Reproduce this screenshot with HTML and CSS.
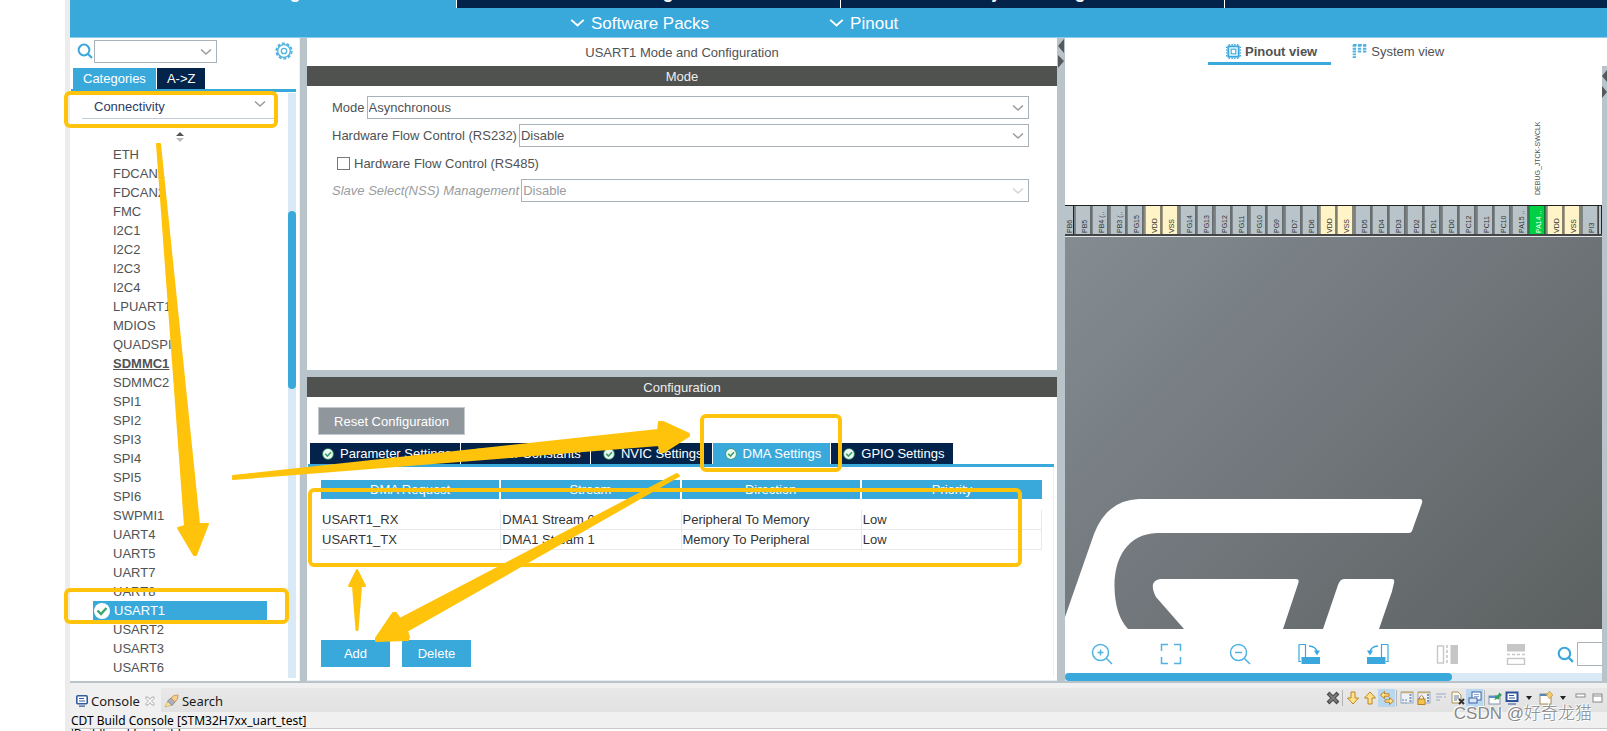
FILE: index.html
```html
<!DOCTYPE html>
<html lang="en">
<head>
<meta charset="utf-8">
<title>USART1 Mode and Configuration</title>
<link rel="stylesheet" href="styles.css">
</head>
<body>
<svg class="defs" aria-hidden="true">
  <symbol id="chev" viewBox="0 0 12 8"><path d="M1 1.5L6 6L11 1.5" fill="none" stroke="currentColor" stroke-width="1.6"/></symbol>
  <symbol id="ok" viewBox="0 0 12 12"><circle cx="6" cy="6" r="5.8" fill="#3f9f6c"/><circle cx="6" cy="6" r="4.9" fill="#eefaf2"/><path d="M3.2 5.8L5.4 8L9 4.2" fill="none" stroke="#35a06a" stroke-width="1.6"/></symbol>
  <symbol id="mag" viewBox="0 0 16 16"><circle cx="7" cy="7" r="5.4" fill="none" stroke="#3aa8dc" stroke-width="2"/><path d="M11 11L15 15" stroke="#3aa8dc" stroke-width="2.2"/></symbol>
  <symbol id="rot" viewBox="0 0 22 22"><path d="M1 1.500H7.500V14M1 1.500V18.500H3" fill="none" stroke="#3aa8dc" stroke-width="1.200"/><path d="M3.500 14H22V21H3.500Z" fill="#3aa8dc"/><path d="M11 3Q18 3.500 19 9" fill="none" stroke="#3aa8dc" stroke-width="1.300"/><path d="M16 7.500H22L19 12.500Z" fill="#3aa8dc"/></symbol>
</svg>
<div class="app">
  <nav class="top-tabs">
    <a class="top-tab top-tab-on" href="#">Pinout &amp; Configuration</a>
    <a class="top-tab" href="#">Clock Configuration</a>
    <a class="top-tab" href="#">Project Manager</a>
    <a class="top-tab" href="#"></a>
  </nav>
  <div class="sub-bar">
    <button class="drop"><svg class="drop-chev"><use href="#chev"/></svg>Software Packs</button>
    <button class="drop"><svg class="drop-chev"><use href="#chev"/></svg>Pinout</button>
  </div>

  <div class="workspace">
    <aside class="side">
      <div class="side-search">
        <svg class="mag"><use href="#mag"/></svg>
        <div class="combo side-combo"><select aria-label="Search peripheral"><option></option></select><svg class="chev"><use href="#chev"/></svg></div>
        <button class="gear" aria-label="Settings"><svg viewBox="0 0 18 18"><circle cx="9" cy="9" r="7.600" fill="none" stroke="#4fb2e0" stroke-width="2" stroke-dasharray="3 1.775"/><circle cx="9" cy="9" r="6.300" fill="none" stroke="#4fb2e0" stroke-width="1.300"/><circle cx="9" cy="9" r="2.700" fill="none" stroke="#4fb2e0" stroke-width="1.300"/></svg></button>
      </div>
      <div class="side-tabs"><button class="side-tab side-tab-on">Categories</button><button class="side-tab">A-&gt;Z</button></div>
      <div class="side-body">
        <div class="side-main">
          <button class="group">Connectivity<svg class="chev"><use href="#chev"/></svg></button>
          <svg class="sorter" viewBox="0 0 10 12"><path d="M1 5L5 1L9 5Z" fill="#555"/><path d="M1 7L5 11L9 7Z" fill="#bbb"/></svg>
          <ul class="list">
            <li>ETH</li><li>FDCAN1</li><li>FDCAN2</li><li>FMC</li><li>I2C1</li><li>I2C2</li><li>I2C3</li><li>I2C4</li><li>LPUART1</li><li>MDIOS</li><li>QUADSPI</li><li class="strong">SDMMC1</li><li>SDMMC2</li><li>SPI1</li><li>SPI2</li><li>SPI3</li><li>SPI4</li><li>SPI5</li><li>SPI6</li><li>SWPMI1</li><li>UART4</li><li>UART5</li><li>UART7</li><li>UART8</li>
            <li class="picked"><svg viewBox="0 0 16 16"><circle cx="8" cy="8" r="8" fill="#fff"/><path d="M3.500 7.500L7 11L12.500 5" fill="none" stroke="#3aa76d" stroke-width="2.400"/></svg>USART1</li>
            <li>USART2</li><li>USART3</li><li>USART6</li>
          </ul>
        </div>
        <div class="track"><div class="thumb"></div></div>
      </div>
    </aside>
    <div class="split"></div>

    <main class="main">
      <h1 class="title">USART1 Mode and Configuration</h1>
      <h2 class="bar">Mode</h2>
      <form class="mode">
        <div class="field"><label for="m">Mode</label><div class="combo"><select id="m"><option>Asynchronous</option></select><svg class="chev"><use href="#chev"/></svg></div></div>
        <div class="field"><label for="h">Hardware Flow Control (RS232)</label><div class="combo"><select id="h"><option>Disable</option></select><svg class="chev"><use href="#chev"/></svg></div></div>
        <div class="check"><input type="checkbox" id="c"><label for="c">Hardware Flow Control (RS485)</label></div>
        <div class="field off"><label for="s">Slave Select(NSS) Management</label><div class="combo"><select id="s" disabled><option>Disable</option></select><svg class="chev"><use href="#chev"/></svg></div></div>
      </form>
      <div class="hsplit"></div>
      <h2 class="bar">Configuration</h2>
      <section class="config">
        <button class="reset">Reset Configuration</button>
        <div class="tabs">
          <button class="tab"><svg><use href="#ok"/></svg>Parameter Settings</button>
          <button class="tab"><svg><use href="#ok"/></svg>User Constants</button>
          <button class="tab"><svg><use href="#ok"/></svg>NVIC Settings</button>
          <button class="tab tab-on"><svg><use href="#ok"/></svg>DMA Settings</button>
          <button class="tab"><svg><use href="#ok"/></svg>GPIO Settings</button>
        </div>
        <div class="pane">
          <table class="dma">
            <thead><tr><th>DMA Request</th><th>Stream</th><th>Direction</th><th>Priority</th></tr></thead>
            <tbody>
              <tr class="gap"><td colspan="4"></td></tr>
              <tr><td>USART1_RX</td><td>DMA1 Stream 0</td><td>Peripheral To Memory</td><td>Low</td></tr>
              <tr><td>USART1_TX</td><td>DMA1 Stream 1</td><td>Memory To Peripheral</td><td>Low</td></tr>
            </tbody>
          </table>
          <div class="actions"><button class="act">Add</button><button class="act">Delete</button></div>
        </div>
      </section>
    </main>
    <div class="split split-r"><svg viewBox="0 0 8 30"><path d="M7 1V15L1 8Z M1 17V30L7 23Z" fill="#55595b"/></svg></div>

    <section class="view">
      <div class="view-tabs">
        <button class="view-tab view-on"><svg viewBox="0 0 16 16" fill="none" stroke="#3aa8dc"><path d="M3.500 1.500V0M6.500 1.500V0M9.500 1.500V0M12.500 1.500V0M3.500 16V14.500M6.500 16V14.500M9.500 16V14.500M12.500 16V14.500M0 3.500H1.500M0 6.500H1.500M0 9.500H1.500M0 12.500H1.500M14.500 3.500H16M14.500 6.500H16M14.500 9.500H16M14.500 12.500H16" stroke-width="1.400"/><rect x="2.500" y="2.500" width="11" height="11" stroke-width="2"/><rect x="5.500" y="5.500" width="5" height="5" stroke-width="1.200"/></svg>Pinout view</button>
        <button class="view-tab"><svg viewBox="0 0 16 16" fill="none" stroke="#4fb2e0" stroke-width="3.600" stroke-dasharray="2 1"><path d="M2.500 1V15M8 1V10M13.500 1V10"/><path d="M1 1H15" stroke-width="2" stroke-dasharray="4 1.500"/></svg>System view</button>
      </div>
      <div class="view-row">
        <div class="canvas">
          <div class="pins">
            <span class="pin edge">PB6</span><span class="pin">PB5</span><span class="pin">PB4 (..</span><span class="pin">PB3 (..</span><span class="pin">PG15</span><span class="pin pw">VDD</span><span class="pin pw">VSS</span><span class="pin">PG14</span><span class="pin">PG13</span><span class="pin">PG12</span><span class="pin">PG11</span><span class="pin">PG10</span><span class="pin">PG9</span><span class="pin">PD7</span><span class="pin">PD6</span><span class="pin pw">VDD</span><span class="pin pw">VSS</span><span class="pin">PD5</span><span class="pin">PD4</span><span class="pin">PD3</span><span class="pin">PD2</span><span class="pin">PD1</span><span class="pin">PD0</span><span class="pin">PC12</span><span class="pin">PC11</span><span class="pin">PC10</span><span class="pin">PA15 ..</span><span class="pin used">PA14 ..<span class="sig">DEBUG_JTCK-SWCLK</span></span><span class="pin pw">VDD</span><span class="pin pw">VSS</span><span class="pin">PI3</span><span class="pin tail"></span>
          </div>
          <div class="chip"><svg viewBox="0 0 537 392" preserveAspectRatio="xMinYMax slice" fill="#fff">
            <path d="M0 380L29 297Q42 263 74 262H355Q358 262 357 266L347 294Q346 296 344 296H92C62 297 49 322 49.500 350Q50 378 63 392H0Z"/>
            <path d="M119 392L91 360Q83 344 95 342H231Q235 342 233 347L218 392Z"/>
            <path d="M258 392L273 348Q275 342 279 342H327Q330 342 329 346Q327 356 324 363L314 392Z"/>
          </svg></div>
          <div class="tools">
            <button aria-label="Zoom in"><svg viewBox="0 0 22 22" fill="none" stroke="#4fb2e0" stroke-width="1.500"><circle cx="9.500" cy="9.500" r="8"/><path d="M15 15L21 21M9.500 6.500V12.500M6.500 9.500H12.500"/></svg></button>
            <button aria-label="Fit"><svg viewBox="0 0 22 22" fill="none" stroke="#4fb2e0" stroke-width="1.500"><path d="M1.500 8V1.500H8M14 1.500H20.500V8M20.500 14V20.500H14M8 20.500H1.500V14"/></svg></button>
            <button aria-label="Zoom out"><svg viewBox="0 0 22 22" fill="none" stroke="#4fb2e0" stroke-width="1.500"><circle cx="9.500" cy="9.500" r="8"/><path d="M15 15L21 21M6 9.500H13"/></svg></button>
            <button aria-label="Rotate right"><svg viewBox="0 0 22 22"><use href="#rot"/></svg></button>
            <button aria-label="Rotate left"><svg viewBox="0 0 22 22"><g transform="translate(22 0) scale(-1 1)"><use href="#rot"/></g></svg></button>
            <button aria-label="Flip horizontally"><svg viewBox="0 0 22 22"><rect x="1.500" y="3" width="6" height="17" fill="none" stroke="#c6c6c6" stroke-width="1.400"/><path d="M11 2V21" stroke="#c6c6c6" stroke-width="1.600" stroke-dasharray="3 2"/><rect x="14.500" y="2" width="7.500" height="19" fill="#c6c6c6"/></svg></button>
            <button aria-label="Flip vertically"><svg viewBox="0 0 22 22"><rect x="2" y="1" width="18" height="7.500" fill="#c6c6c6"/><path d="M2 11.500H20" stroke="#c6c6c6" stroke-width="1.600" stroke-dasharray="3 2"/><rect x="2.500" y="15.500" width="17" height="6" fill="none" stroke="#c6c6c6" stroke-width="1.400"/></svg></button>
            <svg class="mag"><use href="#mag"/></svg><input class="find" type="text" aria-label="Find pin">
          </div>
          <div class="hscroll"><div class="hthumb"></div></div>
        </div>
        <div class="rail"><svg viewBox="0 0 5 30"><path d="M5 2V14L0 8Z M0 18V30L5 24Z" fill="#55595b"/></svg></div>
      </div>
    </section>
  </div>

  <footer class="console">
    <div class="con-bar">
      <button class="con-tab con-on"><svg viewBox="0 0 12 12"><rect x=".8" y=".8" width="10.400" height="8" rx="1" fill="#fff" stroke="#345d9d" stroke-width="1.600"/><path d="M3 3.500H8M3 6H9M3 11.200H9" stroke="#345d9d" stroke-width="1.200"/></svg>Console<svg class="x" viewBox="0 0 10 10"><path d="M1 1H3L5 3.500L7 1H9V2.500L6.500 5L9 7.500V9H7L5 6.500L3 9H1V7.500L3.500 5L1 2.500Z" fill="#fff" stroke="#999" stroke-width=".8"/></svg></button>
      <button class="con-tab"><svg class="torch" viewBox="0 0 15 14"><path d="M1 13L4 7L8 11Z" fill="#f7e3a0" stroke="#d3ab58" stroke-width=".8"/><path d="M3.500 7L7 4L11 8L8 11.500Z" fill="#aab0bd" stroke="#7a7f8e" stroke-width=".8"/><path d="M7 4L10 1.500L14 1L13.500 5L11 8Z" fill="#f6cf8e" stroke="#c58c45" stroke-width=".8"/></svg>Search</button>
      <div class="con-tools">
        <button aria-label="Remove"><svg viewBox="0 0 14 14"><path d="M2 2L12 12M12 2L2 12" stroke="#4c4c4c" stroke-width="4"/><path d="M3 3L11 11M11 3L3 11" stroke="#7b7b7b" stroke-width="2"/></svg></button>
        <i class="bar-sep"></i>
        <button aria-label="Next"><svg viewBox="0 0 14 14"><path d="M5 1H9V7H12.500L7 13L1.500 7H5Z" fill="#ffe38a" stroke="#bd8427"/></svg></button>
        <button aria-label="Previous"><svg viewBox="0 0 14 14"><path d="M5 13H9V7H12.500L7 1L1.500 7H5Z" fill="#ffe38a" stroke="#bd8427"/></svg></button>
        <button class="hot" aria-label="Wrap"><svg viewBox="0 0 14 14"><path d="M.5 4L4.500 .5V2.800H9V5.200H4.500V7.500Z M13.500 10L9.500 6.500V8.800H5V11.200H9.500V13.500Z" fill="#ffe38a" stroke="#bd8427"/></svg></button>
        <i class="bar-sep"></i>
        <button aria-label="Clear"><svg viewBox="0 0 14 14"><rect x="1" y="1" width="12" height="11" fill="#eef2f7" stroke="#9aa8b8"/><path d="M1 1.500H13" stroke="#c8ac6b" stroke-width="1.500"/><path d="M10.500 3V12" stroke="#7894bc" stroke-width="2" stroke-dasharray="2 1"/><path d="M2 9H8M2 12H8" stroke="#a9b9d0" stroke-width="2" stroke-dasharray="2 1"/></svg></button>
        <button aria-label="Scroll lock"><svg viewBox="0 0 14 14"><rect x="1" y="1" width="12" height="11" fill="#eef2f7" stroke="#9aa8b8"/><path d="M1 1.500H13" stroke="#c8ac6b" stroke-width="1.500"/><path d="M11 3V12" stroke="#7894bc" stroke-width="2" stroke-dasharray="2 1"/><path d="M2.500 8V6Q4.500 3 6.500 6V8" fill="none" stroke="#b58324"/><rect x="1" y="8" width="7" height="5.500" fill="#f5c44d" stroke="#b58324"/></svg></button>
        <button aria-label="Word wrap"><svg viewBox="0 0 14 14"><path d="M2 3H12M2 6H8M10 6H12M2 9H6" stroke="#9aa8c6" stroke-width="1.200"/></svg></button>
        <button aria-label="Clear console"><svg viewBox="0 0 14 14"><path d="M1 1H7L10 4V12H1Z" fill="#fdf8e4" stroke="#a89360"/><path d="M3 5H8M3 7H8M3 9H6" stroke="#5f7fb5"/><path d="M8 8L13 13M13 8L8 13" stroke="#333" stroke-width="2"/></svg></button>
        <button class="hot" aria-label="Show console"><svg viewBox="0 0 14 14"><rect x="4" y="1" width="9" height="8" fill="#fff" stroke="#3d67a8"/><rect x="1" y="7" width="8" height="5" fill="#dbe6f6" stroke="#3d67a8"/><path d="M6 3.500H11M6 5.500H11" stroke="#8ba7d2"/></svg></button>
        <i class="bar-sep"></i>
        <button aria-label="Pin console"><svg viewBox="0 0 14 14"><rect x="1" y="5" width="11" height="8" fill="#fff" stroke="#8295aa"/><path d="M1 6H9" stroke="#5b8ccf" stroke-width="2"/><path d="M6 9L7.500 6.500L7 4.500L9.500 4.500L11.500 1.500L14 4L11.500 6L11 8.500L9 8Z" fill="#34a05c"/></svg></button>
        <button aria-label="Display console"><svg viewBox="0 0 14 14"><rect x="1.500" y="1.500" width="11" height="8.500" fill="#fff" stroke="#2d529a" stroke-width="2"/><path d="M4 4.500H9M4 7H10M3 13H11" stroke="#2d529a" stroke-width="1.200"/></svg></button>
        <button aria-label="Console list"><svg viewBox="0 0 14 14"><path d="M4 5H10L7 9Z" fill="#222"/></svg></button>
        <button aria-label="Open console"><svg viewBox="0 0 14 14"><rect x="1" y="3" width="11" height="10" fill="#fff" stroke="#a58a56"/><path d="M1 4H12" stroke="#4f86c6" stroke-width="2"/><path d="M10.500 0L12 2.500L14 4L12 5.500L10.500 8L9 5.500L7 4L9 2.500Z" fill="#f3cf72" stroke="#bd8a35" stroke-width=".6"/></svg></button>
        <button aria-label="Open list"><svg viewBox="0 0 14 14"><path d="M4 5H10L7 9Z" fill="#222"/></svg></button>
        <button aria-label="Minimize"><svg viewBox="0 0 14 14"><rect x="3" y="3" width="9" height="3" fill="#fff" stroke="#888"/></svg></button>
        <button aria-label="Maximize"><svg viewBox="0 0 14 14"><rect x="3" y="3" width="9" height="8" fill="#fff" stroke="#888"/><path d="M3 5H12" stroke="#888"/></svg></button>
      </div>
    </div>
    <div class="con-name">CDT Build Console [STM32H7xx_uart_test]</div>
    <div class="con-out">'Build' and for build</div>
  </footer>
</div>
<svg class="notes" viewBox="0 0 1607 731" aria-hidden="true">
  <g fill="none" stroke="#ffc30b" stroke-width="4">
    <rect x="66" y="93" width="210" height="33" rx="4"/>
    <rect x="66" y="590" width="221" height="32" rx="4"/>
    <rect x="702" y="416" width="138" height="54" rx="4"/>
    <rect x="310" y="490" width="710" height="75" rx="4"/>
  </g>
  <g fill="#ffc30b" stroke="#ffc30b" stroke-width="2" stroke-linejoin="round">
    <path d="M157 144H160L199 524L208 524L196 555H194L178 528L185 526Z"/>
    <path d="M233 476L658 430L659 422L663 422L689 434V436L664 452H660L659 445L233 479Z"/>
    <path d="M677 474L400 619L396 613H393L376 638V641L408 640L409 637L407 631L679 476Z"/>
    <path d="M356.500 630L353 586H349L357 570L365 586H361L357.500 630Z"/>
  </g>
</svg>
<div class="mark">CSDN @好奇龙猫</div>
</body>
</html>
```

FILE: styles.css
```css
* { box-sizing: border-box; }
body { margin: 0; height: 100vh; overflow: hidden; position: relative; background: #fff; font: 13px/19px "Liberation Sans", Arial, sans-serif; color: #505254; }
button, select, input { font: inherit; color: inherit; margin: 0; padding: 0; border: 0; border-radius: 0; background: none; }
h1, h2, ul { margin: 0; padding: 0; font-size: 13px; font-weight: 400; list-style: none; }
svg { display: block; }
.defs { position: absolute; width: 0; height: 0; }
.app { margin-left: 65px; height: 100%; border-left: 5px solid #ececec; display: flex; flex-direction: column; }

.top-tabs { display: grid; grid-template-columns: 387fr 384fr 384fr 382fr; height: 8px; overflow: hidden; background: #03234b; }
.top-tab { display: flex; justify-content: center; align-items: flex-end; height: 8px; padding-bottom: 7px; border-right: 1px solid #fff; color: #fff; font-size: 18px; font-weight: 700; line-height: 18px; text-decoration: none; }
.top-tab:last-child { border: 0; }
.top-tab-on { background: #39a9dc; }
.sub-bar { height: 30px; display: flex; padding-left: 500px; gap: 120px; background: #39a9dc; border-bottom: 1px solid #8dcdeb; }
.drop { display: flex; align-items: center; gap: 6px; padding-top: 1px; color: #fff; font-size: 17px; }
.drop-chev { width: 15px; height: 10px; }

.workspace { flex: 1; min-height: 0; display: grid; grid-template-columns: 230px 7px 750fr 8px 542fr; border-bottom: 2px solid #b8c4ca; }
.split { background: #b8c4ca; }
.split-r svg { width: 8px; height: 30px; }

.side { display: flex; flex-direction: column; padding: 0 3px 3px 1px; border-right: 1px solid #eef0f2; min-height: 0; }
.side-search { display: flex; align-items: center; height: 30px; padding: 0 3px 4px 6px; }
.mag { width: 16px; height: 16px; flex: none; }
.combo { position: relative; flex: 1; height: 23px; border: 1px solid #a9b2b8; background: #fff; }
.combo select { appearance: none; width: 100%; height: 100%; padding: 0 1px; opacity: 1; display: block; }
.chev { width: 12px; height: 8px; color: #9a9ea1; }
.combo .chev { position: absolute; right: 4px; top: 7px; pointer-events: none; }
.side-combo { flex: 0 0 123px; margin-left: 1px; }
.gear { margin-left: auto; width: 18px; height: 18px; }
.side-tabs { display: flex; gap: 1px; height: 24px; padding-left: 2px; border-bottom: 3px solid #39a9dc; }
.side-tab { padding: 0 10px; background: #03234b; color: #fff; }
.side-tab-on { background: #39a9dc; }
.side-body { flex: 1; display: flex; min-height: 0; }
.side-main { flex: 1; padding-left: 11px; }
.group { display: flex; justify-content: space-between; align-items: center; width: 196px; height: 27px; padding: 2px 12px 0; color: #2b3a68; border-bottom: 1px solid #c5cbdb; }
.group .chev { margin-bottom: 4px; }
.sorter { width: 10px; height: 12px; margin: 12px 0 2px 93px; }
.list li { height: 19px; padding-left: 31px; }
.list .strong { font-weight: 700; text-decoration: underline; }
.list .picked { display: flex; align-items: center; gap: 4px; width: 174px; margin-left: 11px; padding-left: 1px; background: #39a9dc; color: #fff; }
.picked svg { width: 16px; height: 16px; }
.track { width: 8px; margin-top: 1px; background: #d9e9f5; }
.thumb { height: 178px; margin-top: 118px; border-radius: 4px; background: #39a9dc; }

.main { display: flex; flex-direction: column; min-width: 0; }
.title { height: 28px; line-height: 30px; text-align: center; }
.bar { height: 20px; line-height: 21px; text-align: center; background: #50524f; color: #eee; }
.mode { flex: 1; padding: 10px 28px 0 25px; }
.field { display: flex; align-items: center; gap: 2px; margin-bottom: 5px; }
.check { display: flex; align-items: center; gap: 4px; height: 22px; margin-bottom: 5px; padding-left: 5px; }
.check input { appearance: none; width: 13px; height: 13px; border: 1px solid #777; background: #fff; }
.off, .off select:disabled { color: #9a9c9e; opacity: 1; }
.off label { font-style: italic; }
.off .chev { color: #d2d5d7; }
.hsplit { height: 7px; background: #b8c4ca; }
.config { height: 284px; display: flex; flex-direction: column; padding: 10px 3px 3px 1px; border-bottom: 1px solid #e8ebed; }
.reset { width: 147px; height: 28px; margin: 0 0 8px 10px; background: #8f979d; color: #fff; border: 1px solid #c3c9cc; }
.tabs { display: flex; gap: 1px; height: 24px; padding-left: 2px; border-bottom: 3px solid #39a9dc; }
.tab { display: flex; align-items: center; gap: 6px; padding: 0 9px 0 12px; background: #03234b; color: #fff; }
.tab svg { width: 12px; height: 12px; }
.tab-on { background: #39a9dc; }
.pane { flex: 1; display: flex; flex-direction: column; padding: 13px 11px 10px 13px; border-right: 1px solid #eef0f2; }
.dma { width: 100%; border-collapse: separate; border-spacing: 0; table-layout: fixed; color: #333; }
.dma th { height: 19px; padding: 0; line-height: 19px; background: #39a9dc; color: #fff; font-weight: 400; border-right: 2px solid #fff; }
.dma th:last-child { border-right: 0; }
.dma td { height: 20px; padding: 0 1px; line-height: 19px; border-right: 1px solid #e8e8ec; border-bottom: 1px solid #e8e8ec; }
.dma .gap td { height: 11px; border: 0; }
.actions { display: flex; gap: 12px; margin-top: auto; }
.act { width: 69px; height: 27px; background: #39a9dc; color: #fff; }

.view { display: flex; flex-direction: column; min-width: 0; }
.view-tabs { height: 28px; display: flex; gap: 3px; padding-left: 143px; }
.view-tab { display: flex; align-items: center; gap: 4px; height: 27px; padding: 3px 14px 0 18px; border-bottom: 3px solid transparent; }
.view-tab svg { width: 15px; height: 15px; }
.view-on { font-weight: 700; border-color: #39a9dc; }
.view-row { flex: 1; display: flex; min-height: 0; }
.rail { width: 5px; background: #b8c4ca; }
.rail svg { width: 5px; height: 30px; margin-top: 2px; }
.canvas { flex: 1; min-width: 0; display: flex; flex-direction: column; }
.pins { display: flex; height: 31px; margin-top: 139px; border-top: 1px solid #222; border-bottom: 2px solid #444; background: #b8c4ca; }
.pin { position: relative; flex: 1; min-width: 0; border-left: 1px solid #222; border-right: 1px solid #444; background: #b8c4ca; font-size: 7px; line-height: 9px; color: #333; writing-mode: vertical-rl; transform: rotate(180deg); white-space: nowrap; padding: 1px 5px 0 0; display: flex; align-items: flex-start; }
.pin.edge { flex: 0 0 9px; overflow: hidden; border-right: 0; padding-right: 0; }
.pin.tail { flex: 0 0 4px; padding: 0; }
.pw { background: #fff4c8; }
.used { background: #00d044; color: #fff; }
.sig { position: absolute; top: 39px; left: 2px; color: #505254; }
.chip { flex: 1; min-height: 0; border-top: 1px solid #e4e8ea; background: linear-gradient(135deg, #848c92, #70767a 50%, #5c6060); overflow: hidden; }
.chip svg { width: 100%; height: 100%; }
.tools { display: flex; align-items: center; height: 44px; padding-left: 26px; padding-top: 6px; overflow: hidden; }
.tools button { width: 22px; height: 22px; margin-right: 47px; flex: none; }
.tools button svg { width: 22px; height: 22px; }
.tools .mag { width: 17px; height: 17px; margin: 0 3px 0 -17px; }
.find { flex: 1; min-width: 25px; width: 25px; height: 24px; border: 1px solid #a9b2b8; border-right: 0; }
.hscroll { height: 8px; background: #d9e9f5; }
.hthumb { width: 72%; height: 8px; border-radius: 4px; background: #39a9dc; }

.console { height: 48px; background: #f0f0f0; padding-top: 5px; font-family: "Noto Sans", "Open Sans", sans-serif; color: #1a1a1a; overflow: hidden; }
.con-bar { display: flex; height: 24px; background: linear-gradient(#e8e8e8, #e2e2e2); }
.con-tab { display: flex; align-items: center; gap: 3px; padding: 2px 0 0 3px; }
.con-tab svg { width: 12px; height: 12px; }
.con-tab .torch { width: 15px; height: 14px; }
.con-tab .x { width: 10px; height: 10px; margin-left: 2px; }
.con-on { padding: 2px 6px 0; background: #f0f0f0; }
.con-tools { display: flex; align-items: center; margin-left: auto; padding: 0 2px 4px 0; }
.con-tools button { width: 17px; height: 18px; display: flex; align-items: center; justify-content: center; }
.con-tools svg { width: 14px; height: 14px; }
.con-tools .hot { background: #b9d7ef; }
.bar-sep { width: 1px; height: 16px; margin: 0 1px; background: #b5b5b5; }
.con-name { height: 17px; line-height: 17px; padding-left: 1px; border-bottom: 1px solid #c8c8c8; font-size: 12px; color: #000; }
.con-out { height: 2px; overflow: hidden; background: #fff; padding-left: 1px; line-height: 10px; font-size: 12px; color: #000; }

.notes { position: absolute; left: 0; top: 0; width: 1607px; height: 731px; pointer-events: none; }
.mark { position: absolute; right: 15px; bottom: 5px; font: 300 17px/24px "Liberation Sans", "Noto Sans CJK SC", sans-serif; color: #888; text-shadow: 1px 1px 0 #fff, -1px -1px 0 #fff; }
```
